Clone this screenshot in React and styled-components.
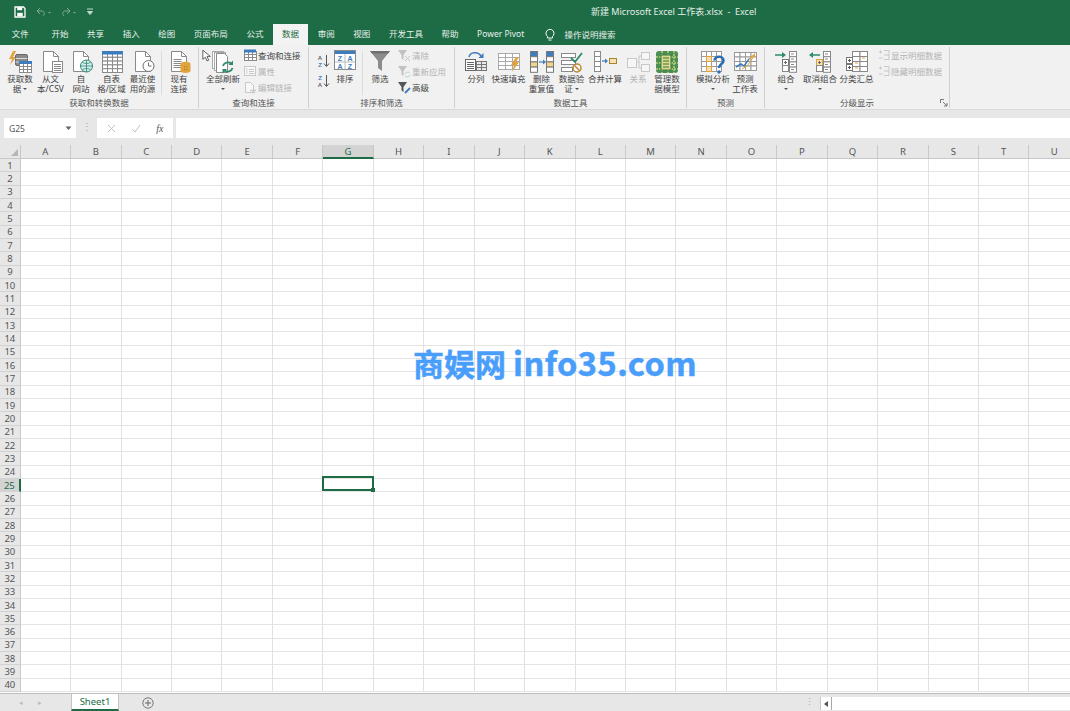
import React from 'react';
import styled, { createGlobalStyle } from 'styled-components';

const GlobalStyle = createGlobalStyle`
  html, body {
    margin: 0;
    padding: 0;
    width: 1070px;
    height: 711px;
    overflow: hidden;
    background: #fff;
  }
`;

const uiFont = `"Noto Sans", "Noto Sans CJK SC", sans-serif`;
const GREEN = '#1e6c45';
const COLS = ['A', 'B', 'C', 'D', 'E', 'F', 'G', 'H', 'I', 'J', 'K', 'L', 'M', 'N', 'O', 'P', 'Q', 'R', 'S', 'T', 'U'];
const ROWS = Array.from({ length: 40 }, (_, i) => i + 1);

const Window = styled.div`
  width: 1070px;
  height: 711px;
  display: flex;
  flex-direction: column;
  position: relative;
  overflow: hidden;
  font-family: ${uiFont};
  color: #444;
`;

/* title bar */
const TitleBar = styled.div`
  height: 23px;
  flex: none;
  display: flex;
  align-items: center;
  background: ${GREEN};
  color: #e4efe9;
  font-size: 9px;
`;

const QuickAccess = styled.div`
  width: 591px;
  flex: none;
  display: flex;
  align-items: center;
  padding-left: 14px;
  box-sizing: border-box;
  gap: 10px;
`;

const TabBar = styled.div`
  height: 22px;
  flex: none;
  display: flex;
  align-items: flex-end;
  padding-left: 2.5px;
  background: ${GREEN};
`;

const Tab = styled.div`
  height: 21px;
  line-height: 20px;
  padding: 0 9.3px;
  margin-right: ${({ $gap }) => $gap || 0}px;
  font-size: 8.5px;
  white-space: nowrap;
  color: ${({ $active }) => ($active ? GREEN : '#e6f0eb')};
  background: ${({ $active }) => ($active ? '#f3f3f3' : 'transparent')};
`;

const SearchTab = styled(Tab)`
  display: flex;
  align-items: center;
  gap: 9px;
  padding-left: 10px;
`;

/* ribbon */
const Ribbon = styled.div`
  height: 65px;
  flex: none;
  display: flex;
  background: #f1f1f1;
  border-bottom: 1px solid #d9d9d9;
  box-sizing: border-box;
  position: relative;
`;

const Group = styled.div`
  width: ${({ $w }) => $w}px;
  flex: none;
  box-sizing: border-box;
  display: flex;
  flex-direction: column;
  border-right: 1px solid #cfcfcf;
  margin: 2px 0 1px;
  position: relative;
`;

const GroupBody = styled.div`
  height: 51px;
  display: flex;
  padding-left: ${({ $pad }) => $pad || 0}px;
`;

const GroupLabel = styled.div`
  height: 11px;
  line-height: 11px;
  font-size: 8.5px;
  text-align: center;
  white-space: nowrap;
  color: #555;
`;

const Launcher = styled.div`
  position: absolute;
  right: 1px;
  bottom: 1px;
  line-height: 0;
`;

const BigButton = styled.div`
  width: ${({ $w }) => $w}px;
  flex: none;
  display: flex;
  flex-direction: column;
  align-items: center;
  color: ${({ $off }) => ($off ? '#b4b4b4' : '#444')};
`;

const IconSlot = styled.div`
  height: 23px;
  padding-top: 3px;
  margin-bottom: 0.5px;
  line-height: 0;
`;

const BigLabel = styled.div`
  font-size: 8.5px;
  line-height: 10.5px;
  text-align: center;
  white-space: nowrap;
`;

const Caret = styled.span`
  display: inline-block;
  width: 0;
  height: 0;
  margin: 0 0 1px ${({ $solo }) => ($solo ? 0 : 2)}px;
  border-left: 2px solid transparent;
  border-right: 2px solid transparent;
  border-top: 2px solid #555;
  vertical-align: middle;
`;

const Divider = styled.div`
  width: 1px;
  flex: none;
  height: 44px;
  margin: 4px ${({ $r }) => $r || 2}px 0 ${({ $l }) => $l || 2}px;
  background: #dcdcdc;
`;

const SmallStack = styled.div`
  display: flex;
  flex-direction: column;
  gap: 2px;
  padding-top: 1px;
  margin-left: ${({ $ml }) => $ml || 0}px;
`;

const SmallButton = styled.div`
  height: 14px;
  display: flex;
  align-items: center;
  gap: 1px;
  font-size: 8.5px;
  white-space: nowrap;
  color: ${({ $off }) => ($off ? '#b4b4b4' : '#444')};
`;

const SortStack = styled.div`
  width: 15px;
  flex: none;
  display: flex;
  flex-direction: column;
  gap: 4px;
  padding-top: 6px;
  line-height: 0;
`;

/* formula bar */
const FormulaRow = styled.div`
  height: 35px;
  flex: none;
  box-sizing: border-box;
  padding: 8px 0 7px 4px;
  display: flex;
  align-items: stretch;
  background: #e7e7e7;
`;

const NameBox = styled.div`
  width: 72px;
  flex: none;
  box-sizing: border-box;
  display: flex;
  align-items: center;
  justify-content: space-between;
  padding: 0 4px 0 5px;
  background: #fff;
  font-size: 8.5px;
  color: #555;
`;

const Grip = styled.div`
  width: 21px;
  flex: none;
  text-align: center;
  color: #a8a8a8;
  font-size: 10px;
  line-height: 17px;
`;

const FxBox = styled.div`
  width: 76px;
  flex: none;
  display: flex;
  align-items: center;
  justify-content: space-around;
  background: #fff;
  padding: 0 2px;
  box-sizing: border-box;
`;

const FxMark = styled.span`
  font-family: "Liberation Serif", serif;
  font-style: italic;
  font-size: 10px;
  color: #555;
`;

const FormulaInput = styled.div`
  flex: 1;
  margin-left: 3px;
  background: #fff;
`;

/* sheet */
const Sheet = styled.div`
  height: 548px;
  flex: none;
  display: grid;
  grid-template-columns: 20.7px repeat(21, 50.45px);
  grid-template-rows: 14px repeat(40, 13.33px);
  overflow: hidden;
  background: #fff;
  position: relative;
`;

const Corner = styled.div`
  background: #e7e7e7;
  border-right: 1px solid #c8c8c8;
  border-bottom: 1px solid #c8c8c8;
  box-sizing: border-box;
  display: flex;
  align-items: flex-end;
  justify-content: flex-end;
  padding: 0 2px 2px 0;
`;

const ColHead = styled.div`
  box-sizing: border-box;
  display: flex;
  align-items: center;
  justify-content: center;
  font-size: 9.5px;
  background: ${({ $on }) => ($on ? '#d3d3d3' : '#e7e7e7')};
  color: ${({ $on }) => ($on ? GREEN : '#555')};
  border-right: 1px solid #c8c8c8;
  border-bottom: ${({ $on }) => ($on ? `2px solid ${GREEN}` : '1px solid #c8c8c8')};
`;

const RowHead = styled.div`
  box-sizing: border-box;
  display: flex;
  align-items: center;
  justify-content: center;
  font-size: 9.5px;
  background: ${({ $on }) => ($on ? '#d3d3d3' : '#e7e7e7')};
  color: ${({ $on }) => ($on ? GREEN : '#555')};
  border-right: ${({ $on }) => ($on ? `2px solid ${GREEN}` : '1px solid #c8c8c8')};
  border-bottom: 1px solid #d2d2d2;
`;

const Cell = styled.div`
  box-sizing: border-box;
  position: relative;
  border-right: 1px solid #e1e1e1;
  border-bottom: 1px solid #e4e4e4;
`;

const Selection = styled.div`
  position: absolute;
  left: -1px;
  top: -3px;
  right: -1px;
  bottom: 0;
  border: 2px solid ${GREEN};
  box-sizing: border-box;
  z-index: 2;
`;

const FillHandle = styled.div`
  position: absolute;
  right: -3px;
  bottom: -3px;
  width: 4px;
  height: 4px;
  background: ${GREEN};
`;

const Watermark = styled.div`
  position: absolute;
  left: 413px;
  top: 192px;
  font-family: "Noto Sans CJK SC", sans-serif;
  font-weight: 700;
  font-size: 31px;
  line-height: 50px;
  color: #4a9efb;
  -webkit-text-stroke: 0.5px #4a9efb;
  white-space: nowrap;
  z-index: 3;
`;

const WatermarkLatin = styled.span`
  font-size: 32.5px;
  letter-spacing: 0.5px;
`;

const Pointer = styled.svg`
  position: absolute;
  left: 202px;
  top: 4px;
  z-index: 4;
`;

/* sheet tabs */
const SheetBar = styled.div`
  flex: 1;
  display: flex;
  background: #e7e7e7;
  border-top: 1px solid #bdbdbd;
  border-bottom: 2px solid #a6a6a6;
  box-sizing: border-box;
`;

const NavArrows = styled.div`
  width: 71px;
  flex: none;
  display: flex;
  align-items: center;
  justify-content: center;
  gap: 15px;
  padding-right: 10px;
  box-sizing: border-box;
  font-size: 7px;
  color: #bdbdbd;
`;

const SheetTab = styled.div`
  width: 48px;
  flex: none;
  box-sizing: border-box;
  text-align: center;
  background: #fff;
  color: ${GREEN};
  font-size: 9.5px;
  line-height: 15px;
  border-left: 1px solid #c4c4c4;
  border-right: 1px solid #c4c4c4;
  border-bottom: 2px solid ${GREEN};
`;

const AddSheet = styled.div`
  width: 58px;
  flex: none;
  display: flex;
  align-items: center;
  justify-content: center;
`;

const BarSpacer = styled.div`
  flex: 1;
`;

const BarGrip = styled.div`
  width: 22px;
  flex: none;
  text-align: center;
  color: #a8a8a8;
  font-size: 9px;
  line-height: 15px;
`;

const ScrollTrack = styled.div`
  width: 250px;
  flex: none;
  margin: 3px 0 1px;
  display: flex;
  background: #fff;
`;

const ScrollLeft = styled.div`
  width: 10px;
  flex: none;
  border-right: 1px solid #a8a8a8;
  border-left: 1px solid #c8c8c8;
  display: flex;
  align-items: center;
  justify-content: center;
`;

/* ---- icons ---- */
const S = ({ w = 24, h = 24, children }) => (
  <svg width={w} height={h} viewBox={`0 0 ${w} ${h}`} fill="none">{children}</svg>
);

const GRAY = '#8a8a8a';
const BLUE = '#3d7dbd';
const ORANGE = '#e2a33c';
const TEAL = '#2d8a6a';
const OFF = '#c8c8c8';

const Grid = ({ x, y, cols, rows, w, h, stroke = GRAY, fill = '#fff' }) => (
  <g>
    {Array.from({ length: cols * rows }, (_, i) => (
      <rect
        key={i}
        x={x + (i % cols) * w + 0.5}
        y={y + Math.floor(i / cols) * h + 0.5}
        width={w}
        height={h}
        fill={fill}
        stroke={stroke}
        strokeWidth="1"
      />
    ))}
  </g>
);

const DocShape = ({ x = 4, stroke = GRAY }) => (
  <g transform={`translate(${x} 0)`}>
    <path d="M.5 1.5h10l5 5v15H.5z" fill="#fff" stroke={stroke} />
    <path d="M10.5 1.5v5h5" stroke={stroke} />
  </g>
);

const Lines = ({ x, y, n = 3, w = 7, gap = 2, stroke = GRAY }) => (
  <path d={Array.from({ length: n }, (_, i) => `M${x} ${y + i * gap + 0.5}h${w}`).join('')} stroke={stroke} />
);

const GetDataIcon = () => (
  <S>
    <path d="M5 1L1 9h3l-2 6 6-8H5l3-6z" fill={ORANGE} />
    <rect x="7.5" y="4.5" width="12" height="11" rx="1.5" fill="#8a8a8a" stroke="#666" />
    <path d="M7.5 8.5h12M7.5 12h12" stroke="#ddd" />
    <Grid x={11} y={13} cols={3} rows={3} w={4} h={3} />
    <rect x="11" y="11" width="13" height="3" fill={BLUE} />
  </S>
);

const FromTextIcon = () => (
  <S>
    <DocShape />
    <rect x="13.5" y="11.5" width="10" height="11" fill="#fff" stroke={GRAY} />
    <Lines x={15} y={14} n={4} w={7} />
  </S>
);

const WebIcon = () => (
  <S>
    <DocShape />
    <circle cx="17.500" cy="16" r="6" fill="#d7ebf3" stroke={TEAL} />
    <path d="M11.500 16h12M17.500 10v12M13.500 12.500c2.500 1.300 5.500 1.300 8 0M13.500 19.500c2.500-1.300 5.500-1.300 8 0" stroke={TEAL} strokeWidth=".8" />
  </S>
);

const TableIcon = () => (
  <S>
    <Grid x={2} y={3} cols={4} rows={5} w={5} h={3.800} />
    <rect x="2" y="1" width="21" height="3.500" fill={BLUE} />
  </S>
);

const RecentIcon = () => (
  <S>
    <DocShape />
    <circle cx="17.500" cy="16" r="5.500" fill="#fff" stroke="#6f6f6f" />
    <path d="M17.500 12.500V16h3" stroke="#6f6f6f" />
  </S>
);

const ExistingIcon = () => (
  <S>
    <DocShape />
    <Lines x={6.500} y={9} n={5} w={8} />
    <path d="M13.500 14c0-3 10-3 10 0v7c0 2.500-10 2.500-10 0z" fill={ORANGE} />
    <path d="M17 17h.8M19.500 17h.8M17 19.500h.8M19.500 19.500h.8" stroke="#8a6a2a" />
  </S>
);

const RefreshIcon = () => (
  <S w={22}>
    <rect x=".5" y="1.500" width="11" height="17" fill="#fff" stroke="#aaa" />
    <rect x="2.500" y="2.500" width="11" height="18" fill="#fff" stroke="#aaa" />
    <path d="M4.500 3.500h8l3 3v16h-11z" fill="#fff" stroke={GRAY} />
    <path d="M11 16a5 5 0 0 1 8-2.500" stroke={TEAL} strokeWidth="1.800" />
    <path d="M21 10.500v4.500h-4.500z" fill={TEAL} />
    <path d="M20.500 18a5 5 0 0 1-8 2.500" stroke={TEAL} strokeWidth="1.800" />
    <path d="M10.500 23.500V19H15z" fill={TEAL} />
  </S>
);

const QueryIcon = () => (
  <S w={14} h={12}>
    <Grid x={1} y={2} cols={3} rows={3} w={4} h={3} />
    <rect x="1" y="0.500" width="12" height="3" fill={BLUE} />
  </S>
);

const PropsIcon = () => (
  <S w={14} h={12}>
    <rect x="1.500" y="1.500" width="11" height="9" fill="#f7f7f7" stroke={OFF} />
    <Lines x={6} y={4} n={3} w={5} stroke={OFF} />
    <path d="M3 4h1.500M3 6h1.500M3 8h1.500" stroke={OFF} />
  </S>
);

const LinksIcon = () => (
  <S w={14} h={13}>
    <path d="M2.500 1.500h5l3 3v7h-8z" fill="#f7f7f7" stroke={OFF} />
    <path d="M7 9.500h6M9 11.500h3" stroke={OFF} strokeWidth="1.500" />
  </S>
);

const Letter = ({ x, y, size = 6, fill = '#666', children }) => (
  <text x={x} y={y} fontSize={size} fontFamily="Liberation Sans, sans-serif" fontWeight="700" textAnchor="middle" fill={fill}>{children}</text>
);

const SortAZIcon = ({ up }) => (
  <S w={14} h={16}>
    <Letter x={4} y={7} fill={up ? '#3d7dbd' : '#666'}>{up ? 'Z' : 'A'}</Letter>
    <Letter x={4} y={14} fill={up ? '#666' : '#3d7dbd'}>{up ? 'A' : 'Z'}</Letter>
    <path d="M10.500 2v11" stroke="#555" />
    <path d="M8 10.500l2.500 3 2.500-3" stroke="#555" />
  </S>
);

const SortIcon = () => (
  <S w={22} h={20}>
    <rect x=".5" y=".5" width="21" height="19" fill="#fff" stroke={GRAY} />
    <rect x="1" y="1" width="20" height="3" fill={BLUE} />
    <path d="M11 4v15M1 12h20" stroke="#bbb" />
    <Letter x={6} y={11} size={7} fill={BLUE}>Z</Letter>
    <Letter x={16} y={11} size={7} fill={BLUE}>A</Letter>
    <Letter x={6} y={18.500} size={7} fill={BLUE}>A</Letter>
    <Letter x={16} y={18.500} size={7} fill={BLUE}>Z</Letter>
  </S>
);

const FunnelIcon = () => (
  <S w={22} h={22}>
    <path d="M1 1h20l-8 10v10l-4-3v-7z" fill="#8c8c8c" />
    <path d="M1 1h20l-2 2.500H3z" fill="#6f6f6f" />
  </S>
);

const SmallFunnel = ({ fill, children }) => (
  <S w={14} h={13}>
    <path d="M1 1h9L6.500 6v5L4.500 9.500V6z" fill={fill} />
    {children}
  </S>
);

const ClearIcon = () => (
  <SmallFunnel fill="#c2c2c2">
    <path d="M8 7l5 5M13 7l-5 5" stroke="#c2c2c2" />
  </SmallFunnel>
);

const ReapplyIcon = () => (
  <SmallFunnel fill="#c2c2c2">
    <path d="M8 9a3 3 0 0 1 5-1M13 10a3 3 0 0 1-5 1" stroke="#b9d3c7" />
  </SmallFunnel>
);

const AdvancedIcon = () => (
  <SmallFunnel fill="#555">
    <path d="M8 12l5-5" stroke={BLUE} strokeWidth="1.800" />
  </SmallFunnel>
);

const TextColumnsIcon = () => (
  <S>
    <rect x="1.500" y="9.500" width="10" height="11" fill="#fff" stroke="#666" />
    <Lines x={3} y={12} n={4} w={7} stroke="#666" />
    <Grid x={12} y={11} cols={2} rows={3} w={5} h={3} stroke="#777" fill="#e9e9e9" />
    <path d="M5 7c1-5 9-6 12-1" stroke={BLUE} strokeWidth="1.500" />
    <path d="M19.500 3v5h-5z" fill={BLUE} />
  </S>
);

const FlashFillIcon = () => (
  <S>
    <Grid x={1} y={3} cols={3} rows={4} w={7} h={4} stroke="#aaa" />
    <path d="M19 7l-5 8h3l-2 7 7-10h-3l3-5z" fill={ORANGE} />
  </S>
);

const DupColumn = ({ x }) => (
  <g>
    {[0, 1, 2, 3].map(i => (
      <rect key={i} x={x + 0.5} y={1.500 + i * 5.200} width="7" height="5.200" fill={i === 2 ? '#f2d48a' : i === 0 ? BLUE : '#fff'} stroke="#777" />
    ))}
  </g>
);

const RemoveDupIcon = () => (
  <S>
    <DupColumn x={0} />
    <DupColumn x={16} />
    <path d="M9 12h5" stroke={BLUE} strokeWidth="1.200" />
    <path d="M13 9.500l3 2.500-3 2.500z" fill={BLUE} />
  </S>
);

const ValidateIcon = () => (
  <S>
    <rect x="1.500" y="3.500" width="14" height="4" fill="#fff" stroke={GRAY} />
    <rect x="1.500" y="10.500" width="14" height="4" fill="#fff" stroke={GRAY} />
    <rect x="1.500" y="17.500" width="11" height="4" fill="#fff" stroke={GRAY} />
    <path d="M11 8l4 4 7-9" stroke={TEAL} strokeWidth="1.800" />
    <circle cx="17" cy="18" r="4" fill="#fff" stroke="#b9862f" strokeWidth="1.500" />
    <path d="M14.500 15.500l5 5" stroke="#b9862f" strokeWidth="1.500" />
  </S>
);

const ConsolidateIcon = () => (
  <S>
    <Grid x={1} y={1} cols={1} rows={4} w={6} h={5} />
    <path d="M9 11h4" stroke={BLUE} strokeWidth="1.200" />
    <path d="M12 8.500l3 2.500-3 2.500z" fill={BLUE} />
    <rect x="16.500" y="8.500" width="7" height="5" fill="#f6e3b5" stroke="#a8842f" />
  </S>
);

const RelationIcon = () => (
  <S>
    <rect x="1.500" y="8.500" width="9" height="9" fill="#f6f6f6" stroke={OFF} />
    <rect x="15.500" y="2.500" width="8" height="7" fill="#f6f6f6" stroke={OFF} />
    <rect x="15.500" y="14.500" width="8" height="7" fill="#f6f6f6" stroke={OFF} />
    <path d="M10 12h3V6h3M13 12v6h3" stroke={OFF} />
  </S>
);

const DataModelIcon = () => (
  <S>
    <rect x="1" y="1" width="22" height="22" rx="3" fill="#4b8f52" />
    <path d="M1 7h22M1 13h22M1 19h22M7 1v22M13 1v22M19 1v22" stroke="#b7cf7a" strokeWidth="1.500" strokeDasharray="2 1" />
    <rect x="6" y="5" width="10" height="15" fill="#dcd98a" stroke="#38783f" />
    <path d="M8 8h6M8 11h6M8 14h6M8 17h6" stroke="#38783f" />
  </S>
);

const WhatIfIcon = () => (
  <S w={26}>
    <Grid x={1} y={1} cols={4} rows={4} w={5} h={5} stroke="#999" />
    <rect x="6.500" y="6.500" width="5" height="5" fill="#f6e3b5" stroke={ORANGE} />
    <rect x="6.500" y="16.500" width="5" height="5" fill="#f6e3b5" stroke={ORANGE} />
    <path d="M14.500 10.500c0-5 9-5 9 0 0 3.500-4.500 3.500-4.500 7.500" stroke="#2a6fb5" strokeWidth="2.600" />
    <circle cx="19" cy="22" r="1.700" fill="#2a6fb5" />
  </S>
);

const ForecastIcon = () => (
  <S>
    <Grid x={1} y={2} cols={4} rows={4} w={5.500} h={4.500} stroke="#999" />
    <path d="M3 17l5-3 3 2 5-7" stroke={BLUE} strokeWidth="1.500" />
    <path d="M16 9l5-4" stroke={ORANGE} strokeWidth="1.500" />
    <path d="M9 19l5-3 3-4 4-6" stroke={ORANGE} strokeWidth="1" />
    <path d="M22 3v4h-4z" fill={ORANGE} />
  </S>
);

const OutlineGrid = ({ mark = '#777', orange }) => (
  <g>
    <Grid x={15} y={1} cols={1} rows={4} w={7} h={5.200} stroke="#888" />
    <path d="M17 4h3M17 9h3M17 14.500h3M17 19.500h3" stroke="#888" />
    <rect x="8.500" y="9.500" width="6" height="6" fill={orange ? '#f6e3b5' : '#fff'} stroke={orange ? ORANGE : mark} />
    <rect x="8.500" y="15.500" width="6" height="6" fill="#fff" stroke="#888" />
    <path d="M10 12.500h3M11.500 11v3" stroke="#666" />
  </g>
);

const GroupIcon = () => (
  <S>
    <OutlineGrid />
    <path d="M1 5h8" stroke={TEAL} strokeWidth="1.500" />
    <path d="M8 2l4 3-4 3z" fill={TEAL} />
  </S>
);

const UngroupIcon = () => (
  <S>
    <OutlineGrid orange />
    <path d="M4 5h8" stroke={TEAL} strokeWidth="1.500" />
    <path d="M5 2L1 5l4 3z" fill={TEAL} />
  </S>
);

const SubtotalIcon = () => (
  <S>
    <Grid x={7} y={1} cols={2} rows={4} w={7.500} h={5} stroke="#888" />
    <rect x="1.500" y="7.500" width="6" height="6" fill="#fff" stroke="#777" />
    <rect x="1.500" y="14.500" width="6" height="6" fill="#fff" stroke="#777" />
    <path d="M3 10.500h3M4.500 9v3M3 17.500h3M4.500 16v3" stroke="#555" />
    <path d="M10 13h3M10 18h3M17 8h3" stroke={ORANGE} />
  </S>
);

const DetailIcon = () => (
  <S w={12} h={12}>
    <path d="M1 3h3M2.500 1.500v3" stroke={OFF} />
    <path d="M6 1.500h5v9H6M6 6h5M1 9h4" stroke={OFF} />
  </S>
);

const SaveIcon = () => (
  <S w={12} h={12}>
    <path d="M1 1h8.500L11 2.500V11H1z" fill="none" stroke="#fff" strokeWidth="1.300" />
    <rect x="3.200" y="1.200" width="5" height="3" fill="#fff" />
    <rect x="3.200" y="6.800" width="5.500" height="3.500" fill="#fff" />
  </S>
);

const UndoIcon = ({ flip }) => (
  <S w={15} h={10}>
    <g transform={flip ? 'translate(10 0) scale(-1 1)' : undefined} stroke="#7fa892" fill="none">
      <path d="M1 4l3-3M1 4l3 3M1 4h5c2.500 0 3 3 1 5" />
    </g>
    <path d="M12 5l1.500 1.500L15 5z" fill="#7fa892" />
  </S>
);

const BulbIcon = () => (
  <S w={12} h={13}>
    <path d="M3.500 8.500a4 4 0 1 1 5 0V10h-5z" stroke="#fff" />
    <path d="M4.500 12h3" stroke="#fff" />
  </S>
);

const big = (w, lines, Icon, opts = {}) => ({ w, lines, Icon, ...opts });

const GROUP_DATA_TOOLS = [
  big(30, ['分列'], TextColumnsIcon),
  big(35, ['快速填充'], FlashFillIcon),
  big(31, ['删除', '重复值'], RemoveDupIcon),
  big(29, ['数据验', '证'], ValidateIcon, { caret: true }),
  big(38, ['合并计算'], ConsolidateIcon),
  big(28, ['关系'], RelationIcon, { off: true }),
  big(30, ['管理数', '据模型'], DataModelIcon),
];

const Big = ({ w, lines, Icon, caret, soloCaret, off }) => (
  <BigButton $w={w} $off={off}>
    <IconSlot><Icon /></IconSlot>
    <BigLabel>
      {lines[0]}
      {lines[1] && <br />}
      {lines[1]}
      {caret && <Caret />}
      {soloCaret && <><br /><Caret $solo /></>}
    </BigLabel>
  </BigButton>
);

const Small = ({ Icon, off, children }) => (
  <SmallButton $off={off}>
    <Icon />
    {children}
  </SmallButton>
);

const TABS = [
  ['文件', 4], ['开始'], ['共享'], ['插入'], ['绘图'], ['页面布局'], ['公式'],
];
const TABS_AFTER = ['审阅', '视图', '开发工具', '帮助', 'Power Pivot'];

export default function App() {
  return (
    <Window>
      <GlobalStyle />
      <TitleBar>
        <QuickAccess>
          <SaveIcon />
          <UndoIcon />
          <UndoIcon flip />
          <S w={8} h={8}><path d="M1 1h6M1.500 3.500l2.500 3 2.500-3z" stroke="#c5d8ce" fill="#c5d8ce" /></S>
        </QuickAccess>
        新建 Microsoft Excel 工作表.xlsx&nbsp;&nbsp;-&nbsp;&nbsp;Excel
      </TitleBar>

      <TabBar>
        {TABS.map(([t, gap]) => <Tab key={t} $gap={gap}>{t}</Tab>)}
        <Tab $active>数据</Tab>
        {TABS_AFTER.map(t => <Tab key={t}>{t}</Tab>)}
        <SearchTab><BulbIcon />操作说明搜索</SearchTab>
      </TabBar>

      <Ribbon>
        <Group $w={199}>
          <GroupBody $pad={5}>
            <Big w={30} lines={['获取数', '据']} Icon={GetDataIcon} caret />
            <Big w={31} lines={['从文', '本/CSV']} Icon={FromTextIcon} />
            <Big w={30} lines={['自', '网站']} Icon={WebIcon} />
            <Big w={31} lines={['自表', '格/区域']} Icon={TableIcon} />
            <Big w={31} lines={['最近使', '用的源']} Icon={RecentIcon} />
            <Divider $l={3} $r={2} />
            <Big w={30} lines={['现有', '连接']} Icon={ExistingIcon} />
          </GroupBody>
          <GroupLabel>获取和转换数据</GroupLabel>
        </Group>

        <Group $w={110}>
          <GroupBody $pad={4}>
            <Big w={40} lines={['全部刷新']} Icon={RefreshIcon} soloCaret />
            <SmallStack>
              <Small Icon={QueryIcon}>查询和连接</Small>
              <Small Icon={PropsIcon} off>属性</Small>
              <Small Icon={LinksIcon} off>编辑链接</Small>
            </SmallStack>
          </GroupBody>
          <GroupLabel>查询和连接</GroupLabel>
        </Group>

        <Group $w={146}>
          <GroupBody $pad={7}>
            <SortStack>
              <SortAZIcon />
              <SortAZIcon up />
            </SortStack>
            <Big w={28} lines={['排序']} Icon={SortIcon} />
            <Divider $l={3} $r={2} />
            <Big w={30} lines={['筛选']} Icon={FunnelIcon} />
            <SmallStack $ml={2}>
              <Small Icon={ClearIcon} off>清除</Small>
              <Small Icon={ReapplyIcon} off>重新应用</Small>
              <Small Icon={AdvancedIcon}>高级</Small>
            </SmallStack>
          </GroupBody>
          <GroupLabel>排序和筛选</GroupLabel>
        </Group>

        <Group $w={232}>
          <GroupBody $pad={6}>
            {GROUP_DATA_TOOLS.map(b => <Big key={b.lines[0]} {...b} />)}
          </GroupBody>
          <GroupLabel>数据工具</GroupLabel>
        </Group>

        <Group $w={78}>
          <GroupBody $pad={6}>
            <Big w={40} lines={['模拟分析']} Icon={WhatIfIcon} soloCaret />
            <Big w={24} lines={['预测', '工作表']} Icon={ForecastIcon} />
          </GroupBody>
          <GroupLabel>预测</GroupLabel>
        </Group>

        <Group $w={185}>
          <GroupBody $pad={7}>
            <Big w={28} lines={['组合']} Icon={GroupIcon} soloCaret />
            <Big w={40} lines={['取消组合']} Icon={UngroupIcon} soloCaret />
            <Big w={33} lines={['分类汇总']} Icon={SubtotalIcon} />
            <SmallStack $ml={5}>
              <Small Icon={DetailIcon} off>显示明细数据</Small>
              <Small Icon={DetailIcon} off>隐藏明细数据</Small>
            </SmallStack>
          </GroupBody>
          <GroupLabel>分级显示</GroupLabel>
          <Launcher>
            <S w={8} h={8}><path d="M.5 4V.5H4M3 3l4 4M7 4v3H4" stroke="#777" /></S>
          </Launcher>
        </Group>
        <Pointer width="10" height="14" viewBox="0 0 12 16">
          <path d="M1 1v11l3-2.500 2 4.500 2-1-2-4.500h4z" fill="#fff" stroke="#444" />
        </Pointer>
      </Ribbon>

      <FormulaRow>
        <NameBox>
          G25
          <S w={7} h={5}><path d="M.5 .5h6L3.500 4z" fill="#666" /></S>
        </NameBox>
        <Grip>⋮</Grip>
        <FxBox>
          <S w={9} h={9}><path d="M1 1l7 7M8 1L1 8" stroke="#c4c4c4" /></S>
          <S w={10} h={9}><path d="M1 5l3 3 5-7" stroke="#c4c4c4" /></S>
          <FxMark>fx</FxMark>
        </FxBox>
        <FormulaInput />
      </FormulaRow>

      <Sheet>
        <Corner><S w={7} h={7}><path d="M7 0v7H0z" fill="#b5b5b5" /></S></Corner>
        {COLS.map(c => <ColHead key={c} $on={c === 'G'}>{c}</ColHead>)}
        {ROWS.map(r => (
          <React.Fragment key={r}>
            <RowHead $on={r === 25}>{r}</RowHead>
            {COLS.map(c => (
              <Cell key={c}>
                {r === 25 && c === 'G' && <Selection><FillHandle /></Selection>}
              </Cell>
            ))}
          </React.Fragment>
        ))}
        <Watermark>商娱网 <WatermarkLatin>info35.com</WatermarkLatin></Watermark>
      </Sheet>

      <SheetBar>
        <NavArrows><span>◂</span><span>▸</span></NavArrows>
        <SheetTab>Sheet1</SheetTab>
        <AddSheet>
          <S w={12} h={12}>
            <circle cx="6" cy="6" r="5.200" fill="none" stroke="#777" />
            <path d="M3 6h6M6 3v6" stroke="#666" />
          </S>
        </AddSheet>
        <BarSpacer />
        <BarGrip>⋮</BarGrip>
        <ScrollTrack>
          <ScrollLeft><S w={4} h={6}><path d="M4 0v6L0 3z" fill="#555" /></S></ScrollLeft>
        </ScrollTrack>
      </SheetBar>
    </Window>
  );
}
